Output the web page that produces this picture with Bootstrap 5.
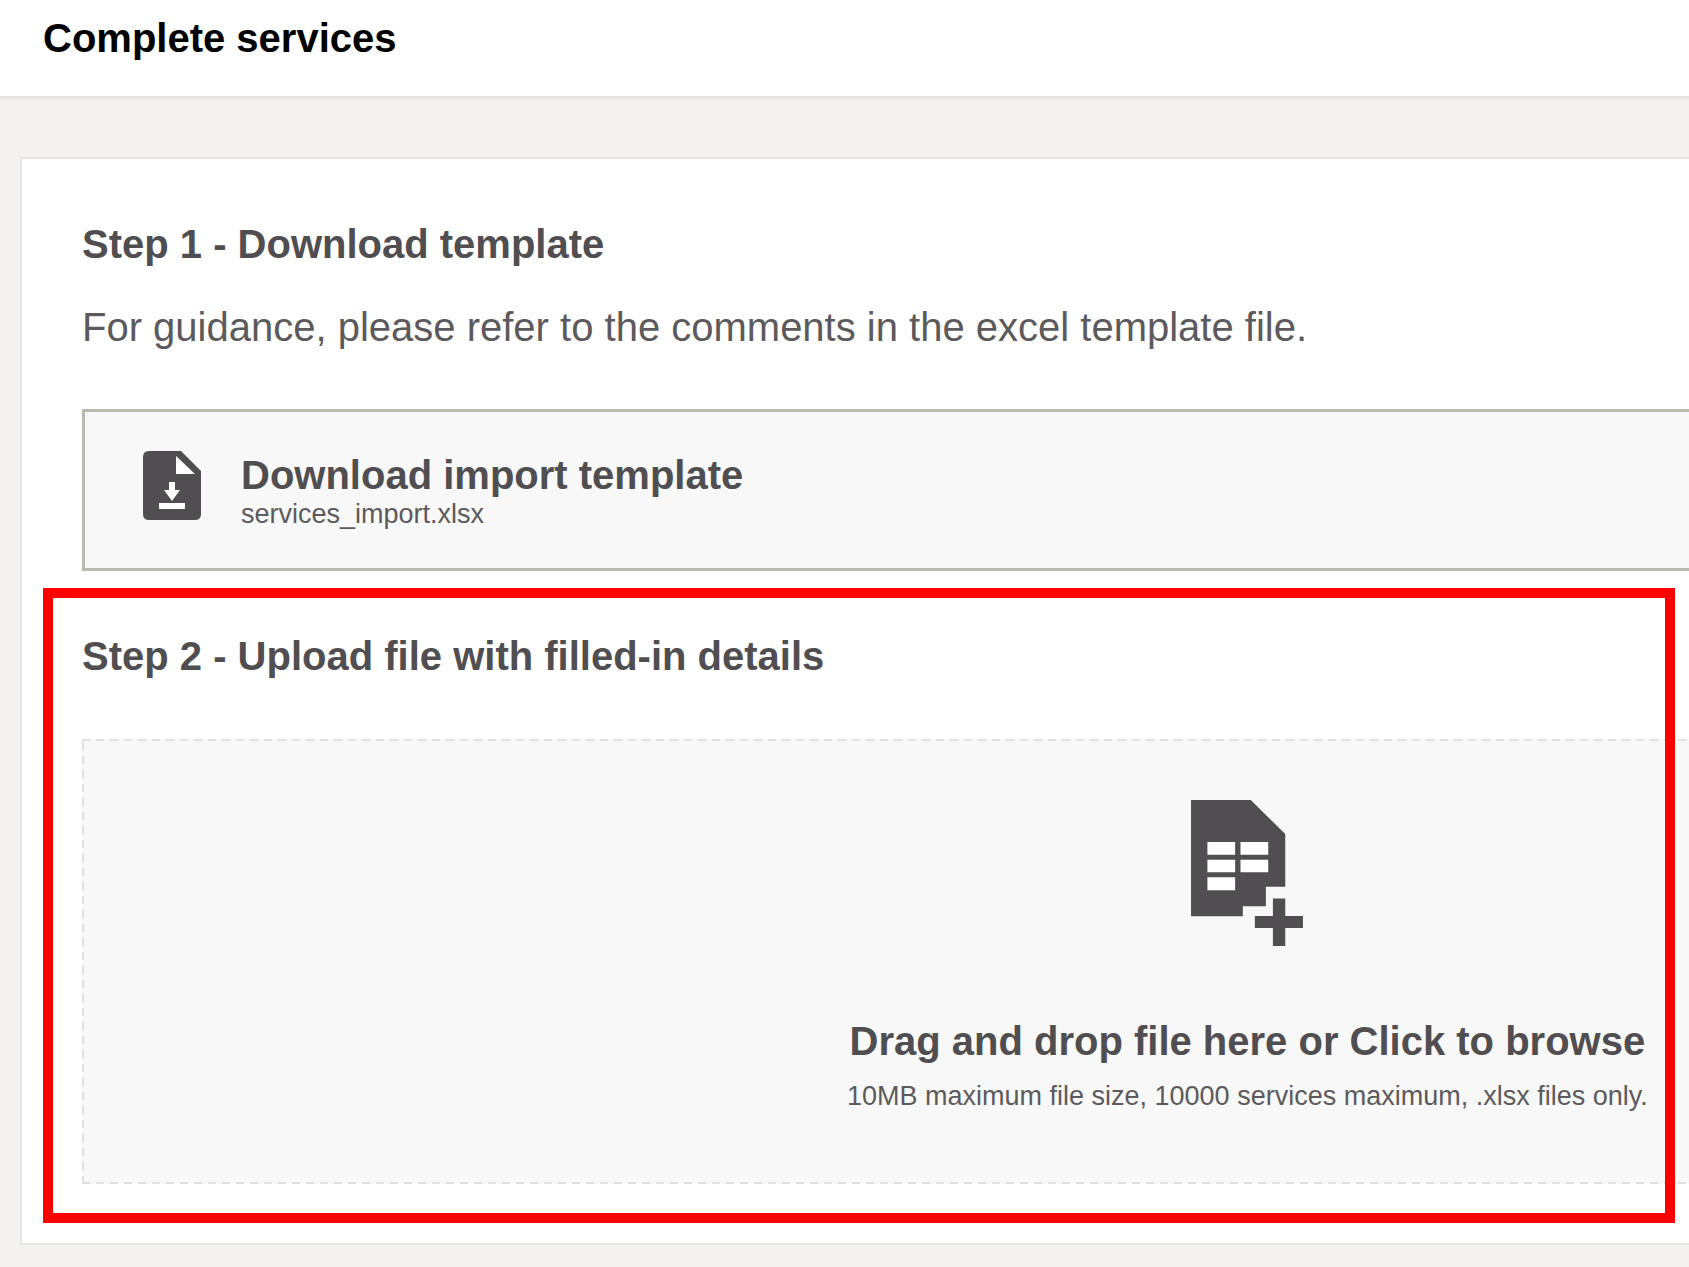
<!DOCTYPE html>
<html lang="en">
<head>
<meta charset="utf-8">
<meta name="viewport" content="width=device-width, initial-scale=1">
<title>Complete services</title>
<link rel="stylesheet" href="https://cdn.jsdelivr.net/npm/bootstrap@5.3.0/dist/css/bootstrap.min.css">
<style>
  :root { --ink: #504e51; --ink-soft: #5c5a5d; --line: #e6e5e2; --dash: #e1e0dc; }
  body { background: #f3f2f0; color: var(--ink); font-family: "Liberation Sans", Arial, sans-serif; }
  .app-header { padding: 14px 43px 34px; border-bottom: 3px solid var(--line); }
  .heading { font-size: 40px; line-height: 48px; font-weight: 700; margin: 0; }
  .intro { font-size: 40px; line-height: 48px; margin: 35px 0 58px; color: var(--ink-soft); }
  .hint { font-size: 27px; line-height: 30px; color: var(--ink-soft); }
  /* the work area is wider than the window and runs off its right edge */
  .work-area { width: 148%; padding: 58px 25px 22px 20px; }
  .panel { border: 2px solid var(--line); border-radius: 0; padding: 61px 60px 59px; }
  .download-box { gap: 40px; padding: 39px 58px; background: #f8f8f8; border: 3px solid #b9b9ae; color: var(--ink); }
  .upload-step { margin-top: 61px; }
  .dropzone {
    margin-top: 59px; padding: 61px 20px 73px; cursor: pointer;
    background:
      repeating-linear-gradient(90deg, var(--dash) 0 8px, transparent 8px 14px) top / 100% 2px no-repeat,
      repeating-linear-gradient(90deg, var(--dash) 0 8px, transparent 8px 14px) bottom / 100% 2px no-repeat,
      repeating-linear-gradient(0deg, var(--dash) 0 8px, transparent 8px 14px) left / 2px 100% no-repeat,
      repeating-linear-gradient(0deg, var(--dash) 0 8px, transparent 8px 14px) right / 2px 100% no-repeat,
      #f8f8f8;
  }
  .dropzone .heading { margin: 71px 0 16px; }
  .highlight { top: -44px; bottom: -39px; left: -39px; width: calc(100vw - 57px); border: 10px solid #f00; pointer-events: none; }
</style>
</head>
<body>
<header class="app-header bg-white">
  <h1 class="heading text-black">Complete services</h1>
</header>
<main class="overflow-hidden">
  <div class="work-area">
    <div class="panel card bg-white">
      <section>
        <h2 class="heading">Step 1 - Download template</h2>
        <p class="intro">For guidance, please refer to the comments in the excel template file.</p>
        <a href="#" class="download-box d-flex align-items-start text-decoration-none">
          <svg width="58" height="69" viewBox="0 0 58 69" aria-hidden="true">
            <path fill="#504e51" d="M6 0H38L58 20V63Q58 69 52 69H6Q0 69 0 63V6Q0 0 6 0Z"/>
            <path fill="#fff" d="M33 5V23H52ZM26 31H32V39H37L29 50L21 39H26ZM16 52H42V58H16Z"/>
          </svg>
          <span class="d-flex flex-column">
            <span class="heading">Download import template</span>
            <span class="hint">services_import.xlsx</span>
          </span>
        </a>
      </section>
      <section class="upload-step position-relative">
        <h2 class="heading">Step 2 - Upload file with filled-in details</h2>
        <label for="file" class="dropzone d-flex flex-column align-items-center text-center">
          <svg width="112" height="146" viewBox="63 59 335 437" aria-hidden="true">
            <path fill="#504e51" d="M63 59H242L345 161V319H287V377H218V407H63ZM308 354H345V406H398V442H345V496H308V442H254V406H308Z"/>
            <path fill="#fff" d="M112 185H195V223H112ZM211 185H294V223H211ZM112 238H195V275H112ZM211 238H294V275H211ZM112 290H195V329H112Z"/>
          </svg>
          <span class="heading">Drag and drop file here or Click to browse</span>
          <span class="hint">10MB maximum file size, 10000 services maximum, .xlsx files only.</span>
          <input type="file" id="file" accept=".xlsx" class="visually-hidden">
        </label>
        <div class="highlight position-absolute"></div>
      </section>
    </div>
  </div>
</main>
<script src="https://cdn.jsdelivr.net/npm/bootstrap@5.3.0/dist/js/bootstrap.bundle.min.js"></script>
</body>
</html>
